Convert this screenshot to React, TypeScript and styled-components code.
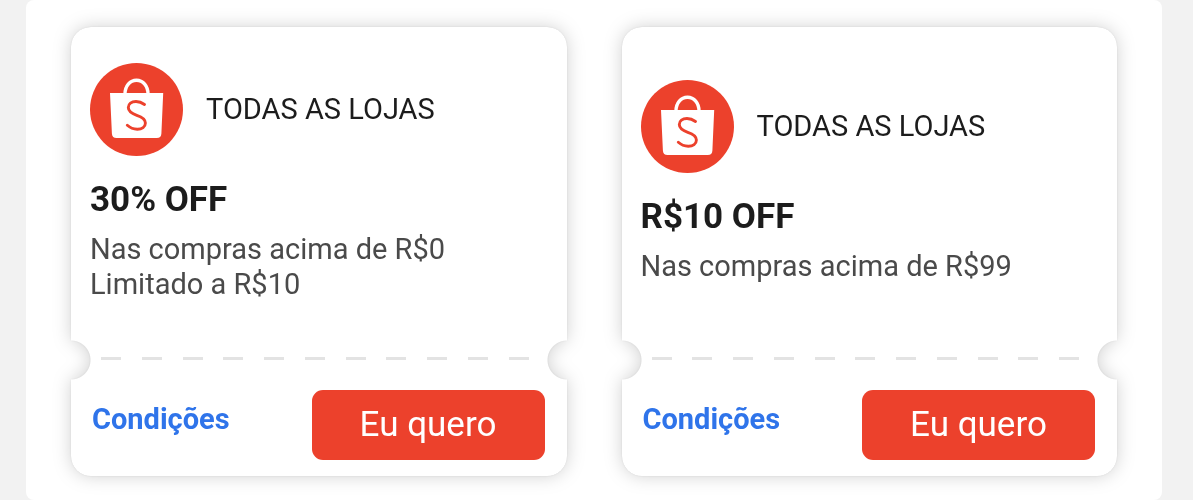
import React from "react";
import styled, { createGlobalStyle } from "styled-components";

const GlobalStyle = createGlobalStyle`
  *, *::before, *::after { box-sizing: border-box; }
  body {
    margin: 0;
    background: #f2f2f2;
    font-family: Roboto, "Liberation Sans", sans-serif;
    color: #1c1c1c;
  }
`;

const Panel = styled.main`
  margin: 0 31px 0 26px;
  padding: 27px 45px 24px;
  background: #fff;
  border-radius: 8px;
`;

const CouponGrid = styled.div`
  display: grid;
  grid-template-columns: repeat(2, minmax(0, 1fr));
  gap: 55px;
`;

const CouponShadow = styled.article`
  display: flex;
  filter: drop-shadow(0 0 1px rgba(0, 0, 0, 0.08)) drop-shadow(0 0 9px rgba(0, 0, 0, 0.18));
`;

const Coupon = styled.div`
  flex: 1;
  min-width: 0;
  display: flex;
  flex-direction: column;
  background: #fff;
  border-radius: 20px;
  mask:
    radial-gradient(circle at 0 calc(100% - 116px), transparent 19px, #000 20px),
    radial-gradient(circle at 100% calc(100% - 116px), transparent 19px, #000 20px);
  mask-composite: intersect;
`;

const Body = styled.div`
  flex: 1;
  min-height: 311px;
  display: flex;
  flex-direction: column;
  justify-content: center;
  padding: 0 19px 1px;
`;

const Store = styled.div`
  display: flex;
  align-items: center;
  gap: 23px;
  font-size: 29px;
  line-height: 35px;
`;

const Logo = styled.svg`
  flex: none;
  width: 93px;
  height: 93px;
`;

const Title = styled.h2`
  margin: 23px 0 11px;
  font-size: 35px;
  line-height: 42px;
  font-weight: 700;
`;

const Details = styled.p`
  margin: 0;
  font-size: 29px;
  line-height: 35px;
  color: #4a4a4a;
`;

const DetailLine = styled.span`
  display: block;
`;

const Divider = styled.div`
  display: flex;
  justify-content: space-between;
  padding: 19px 38px 0 30px;
  height: 52px;
`;

const Dash = styled.span`
  width: 20px;
  height: 3px;
  background: #e3e3e3;
`;

const Footer = styled.footer`
  display: flex;
  justify-content: space-between;
  align-items: flex-start;
  padding: 0 22px 16px 21px;
`;

const TermsLink = styled.a`
  margin-top: 12px;
  font-size: 29px;
  line-height: 35px;
  font-weight: 700;
  color: #2f74ea;
  text-decoration: none;
`;

const ClaimButton = styled.button`
  width: 233px;
  height: 70px;
  padding: 0;
  border: 0;
  border-radius: 11px;
  background: #ec412c;
  color: #fff;
  font: 400 35px/42px Roboto, "Liberation Sans", sans-serif;
  cursor: pointer;
`;

const ShopLogo = () => (
  <Logo viewBox="0 0 93 93" aria-hidden="true">
    <circle cx="46.5" cy="46.5" r="46.5" fill="#ec412c" />
    <path
      d="M35 31C35 23 40 17.200 46.500 17.200S58 23 58 31"
      fill="none"
      stroke="#fff"
      strokeWidth="3.400"
    />
    <path
      d="M20 30H73.200L71.400 70.500Q71.200 75 66.700 75H26.600Q22.100 75 21.900 70.500Z"
      fill="#fff"
    />
    <path
      d="M54.500 41.500C51.500 39.300 49 38.500 46 38.500C41.500 38.500 38.300 41 38.300 44.600C38.300 48.500 41 50.300 46.800 52.300C52.600 54.200 55.400 56.200 55.400 60C55.400 63.700 52 66.200 47.300 66.200C43.300 66.200 40 64.800 37.300 62.300"
      fill="none"
      stroke="#ec412c"
      strokeWidth="2.900"
      strokeLinecap="round"
    />
  </Logo>
);

const coupons = [
  { title: "30% OFF", details: ["Nas compras acima de R$0", "Limitado a R$10"] },
  { title: "R$10 OFF", details: ["Nas compras acima de R$99"] },
];

const dashes = Array.from({ length: 11 }, (_, index) => index);

export default function App() {
  return (
    <>
      <GlobalStyle />
      <Panel>
        <CouponGrid>
          {coupons.map((coupon) => (
            <CouponShadow key={coupon.title}>
              <Coupon>
                <Body>
                  <Store>
                    <ShopLogo />
                    <span>TODAS AS LOJAS</span>
                  </Store>
                  <Title>{coupon.title}</Title>
                  <Details>
                    {coupon.details.map((line) => (
                      <DetailLine key={line}>{line}</DetailLine>
                    ))}
                  </Details>
                </Body>
                <Divider aria-hidden="true">
                  {dashes.map((dash) => (
                    <Dash key={dash} />
                  ))}
                </Divider>
                <Footer>
                  <TermsLink href="#condicoes">Condições</TermsLink>
                  <ClaimButton type="button">Eu quero</ClaimButton>
                </Footer>
              </Coupon>
            </CouponShadow>
          ))}
        </CouponGrid>
      </Panel>
    </>
  );
}
